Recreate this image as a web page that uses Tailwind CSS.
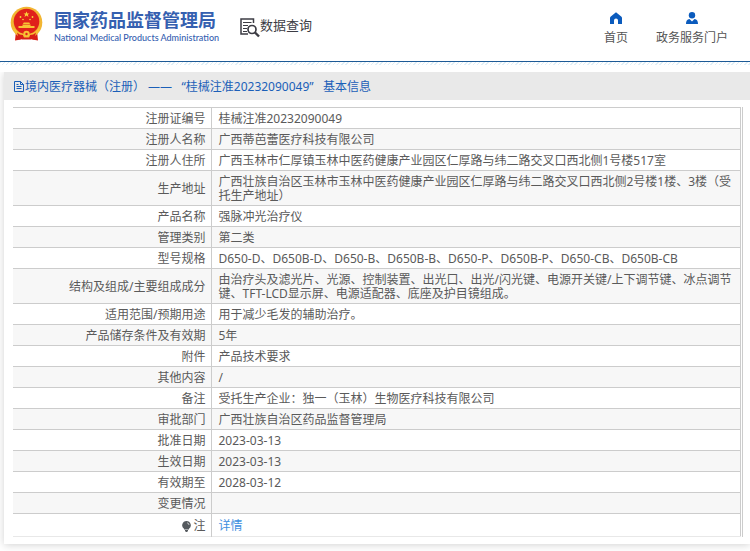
<!DOCTYPE html>
<html lang="zh-CN">
<head>
<meta charset="utf-8">
<meta name="viewport" content="width=device-width, initial-scale=1">
<title>数据查询 - 国家药品监督管理局</title>
<script src="https://cdn.jsdelivr.net/npm/@tailwindcss/browser@4"></script>
</head>
<body class="min-h-screen overflow-x-hidden bg-white font-['Noto_Sans','Noto_Sans_CJK_SC',sans-serif] text-xs text-[#5a5a5a]">
<header class="flex h-[62px] items-start border-b border-[#1d5a96] pr-[22px] pl-[10px]">
  <a href="#" class="flex items-start gap-[11px] pt-[6px] text-[#3560b0]">
    <svg class="h-[36px] w-[33px]" viewBox="0 0 33 36" aria-hidden="true">
      <path d="M6 25 L5 34.500 L11 33.500 L16.500 31 L22 33.500 L28 34.500 L27 25Z" fill="#d81e18"/>
      <circle cx="16.500" cy="16.500" r="15.800" fill="#f2b632"/>
      <circle cx="16.500" cy="15.500" r="12.800" fill="#e0201b"/>
      <path d="M16.500 5.500l.9 2h2.100l-1.700 1.300.7 2.100-2-1.300-2 1.300.7-2.100-1.700-1.300h2.100z" fill="#fbd23c"/>
      <g fill="#fbd23c"><circle cx="10.500" cy="11" r=".9"/><circle cx="13" cy="13.500" r=".8"/><circle cx="20" cy="13.500" r=".8"/><circle cx="22.500" cy="11" r=".9"/></g>
      <path d="M13 18l.7-1.500h5.600l.7 1.500zM12.500 18.500h8v1.500h4v2h-16v-2h4z" fill="#f8c234"/>
      <path d="M4 23c2 4 5 5.500 8.500 5.500M29 23c-2 4-5 5.500-8.500 5.500" fill="none" stroke="#f8c234" stroke-width="2"/>
      <path d="M7 26.500q2.500 2.500 6 2.500l1 3-5 1.500zM26 26.500q-2.500 2.500-6 2.500l-1 3 5 1.500z" fill="#d81e18"/>
      <circle cx="16.500" cy="28" r="3.200" fill="#f8c234"/><circle cx="16.500" cy="28" r="1.200" fill="#e0201b"/>
      <path d="M11 31.500h11l-1 2h-9z" fill="#d81e18"/>
    </svg>
    <span class="flex flex-col pt-[3px]">
      <span class="text-lg leading-[22px] font-bold whitespace-nowrap">国家药品监督管理局</span>
      <span class="font-['Lato',sans-serif] text-[9px] leading-[14px] font-medium whitespace-nowrap">National Medical Products Administration</span>
    </span>
  </a>
  <a href="#" class="ml-5 flex items-center pt-[15px] text-[13px] leading-5 whitespace-nowrap text-[#3c3c44]">
    <svg class="h-[22px] w-[21px]" viewBox="0 0 21 22" fill="none" stroke="#3c3c44" aria-hidden="true">
      <path d="M14.500 7V3H2v15h7" stroke-width="1.500"/>
      <path d="M4 6.500h8.500M4 9.500h5M4 12.500h4M4 15.500h4" stroke-width="1"/>
      <circle cx="13" cy="13.500" r="4" stroke-width="1.700"/>
      <path d="M16 16.500l4 4" stroke-width="2.400"/>
    </svg><span class="pb-1">数据查询</span></a>
  <nav class="ml-auto flex gap-7 pt-3 text-[#555]">
    <a href="#" class="flex flex-col items-center gap-1">
      <svg class="h-3 w-3" viewBox="0 0 12 12" fill="#0b5bbd" aria-hidden="true"><path d="M6 .3l5.500 4.500.5 1V12H8V8.500a2 2 0 0 0-4 0V12H0V5.800l.5-1z"/></svg>
      <span class="leading-5">首页</span>
    </a>
    <a href="#" class="flex flex-col items-center gap-1">
      <svg class="h-3 w-3" viewBox="0 0 12 12" fill="#0b5bbd" aria-hidden="true"><circle cx="6" cy="3.200" r="3.200"/><path d="M0 12c0-3 1-4.500 3.500-5L6 9.500 8.500 7C11 7.500 12 9 12 12z"/></svg>
      <span class="leading-5">政务服务门户</span>
    </a>
  </nav>
</header>
<div class="h-[10px] bg-[repeating-linear-gradient(135deg,#e0eff7_0_1px,#fff_1px_3px)] bg-size-[100%_3px] bg-repeat-x"></div>
<div class="overflow-hidden pb-[7px]">
<main class="ml-1 bg-white pb-[7px] shadow-[0_1px_8px_rgba(0,0,0,0.18)]">
  <h1 class="flex h-7 items-center bg-[#e9e9e9] pt-px pl-[10px] text-xs whitespace-pre text-[#1b5fb8]">
    <svg class="mr-px h-[11px] w-[10px]" viewBox="0 0 10 11" fill="none" stroke="#1b5fb8" aria-hidden="true"><path d="M.5.500h6l3 3v7h-9zM6.500.500v3h3M2.500 5.500h5M2.500 7.500h5M2.500 3.500h2"/></svg><span>境内医疗器械（注册） ——   “桂械注准20232090049”   基本信息</span></h1>
  <div class="mt-[7px] mr-[7px] ml-[9px] border-r border-[#ccc] pr-px">
    <table class="w-full border-collapse border-r border-b border-[#ccc] border-b-[#e8e8e8] leading-[14px] [&_td]:px-[7px] [&_td]:pt-1 [&_td]:pb-[2px] [&_th]:w-[198px] [&_th]:border-r [&_th]:border-[#ccc] [&_th]:px-[5px] [&_th]:pt-1 [&_th]:pb-[2px] [&_th]:text-right [&_th]:font-normal [&_tr]:h-[21px] [&_tr]:border-t [&_tr]:border-[#ccc] [&_tr:nth-child(even)]:bg-[#f7f7f7]">
      <tbody>
        <tr><th scope="row">注册证编号</th><td>桂械注准20232090049</td></tr>
        <tr><th scope="row">注册人名称</th><td>广西蒂芭蕾医疗科技有限公司</td></tr>
        <tr><th scope="row">注册人住所</th><td>广西玉林市仁厚镇玉林中医药健康产业园区仁厚路与纬二路交叉口西北侧1号楼517室</td></tr>
        <tr><th scope="row">生产地址</th><td>广西壮族自治区玉林市玉林中医药健康产业园区仁厚路与纬二路交叉口西北侧2号楼1楼、3楼（受托生产地址）</td></tr>
        <tr><th scope="row">产品名称</th><td>强脉冲光治疗仪</td></tr>
        <tr><th scope="row">管理类别</th><td>第二类</td></tr>
        <tr><th scope="row">型号规格</th><td>D650-D、D650B-D、D650-B、D650B-B、D650-P、D650B-P、D650-CB、D650B-CB</td></tr>
        <tr><th scope="row">结构及组成/主要组成成分</th><td>由治疗头及滤光片、光源、控制装置、出光口、出光/闪光键、电源开关键/上下调节键、冰点调节键、TFT-LCD显示屏、电源适配器、底座及护目镜组成。</td></tr>
        <tr><th scope="row">适用范围/预期用途</th><td>用于减少毛发的辅助治疗。</td></tr>
        <tr><th scope="row">产品储存条件及有效期</th><td>5年</td></tr>
        <tr><th scope="row">附件</th><td>产品技术要求</td></tr>
        <tr><th scope="row">其他内容</th><td>/</td></tr>
        <tr><th scope="row">备注</th><td>受托生产企业：独一（玉林）生物医疗科技有限公司</td></tr>
        <tr><th scope="row">审批部门</th><td>广西壮族自治区药品监督管理局</td></tr>
        <tr><th scope="row">批准日期</th><td>2023-03-13</td></tr>
        <tr><th scope="row">生效日期</th><td>2023-03-13</td></tr>
        <tr><th scope="row">有效期至</th><td>2028-03-12</td></tr>
        <tr><th scope="row">变更情况</th><td></td></tr>
        <tr><th scope="row"><span class="flex h-4 items-center justify-end gap-[2px]"><svg class="h-[11px] w-[9px]" viewBox="0 0 9 11" aria-hidden="true"><path d="M4.500 0a4.300 4.300 0 0 1 2.500 7.800V8.500H2v-.7A4.300 4.300 0 0 1 4.500 0zM3 9h3v1l-1 1H4l-1-1z" fill="#555a5e"/><path d="M5 1.800q2 .3 2 2.200" fill="none" stroke="#ddd" stroke-width=".8"/></svg>注</span></th><td><a href="#" class="block h-4 leading-4 text-[#3d8fe0]">详情</a></td></tr>
      </tbody>
    </table>
  </div>
</main>
</div>
</body>
</html>
